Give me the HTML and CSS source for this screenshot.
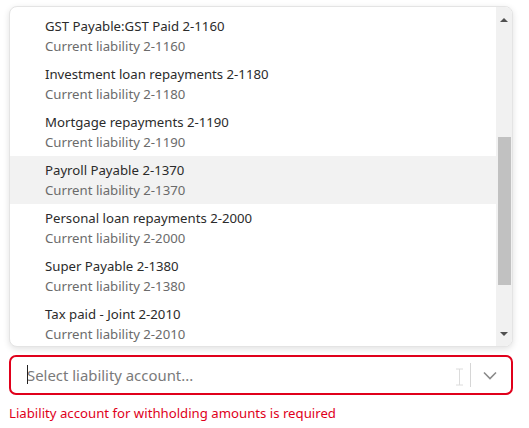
FILE: index.html
```html
<!DOCTYPE html>
<html>
<head>
<meta charset="utf-8">
<link rel="stylesheet" href="styles.css">
</head>
<body>
<div class="field">
  <div class="menu">
    <div class="list">
      <div class="item"><div class="name">GST Payable:GST Paid 2-1160</div><div class="sub">Current liability 2-1160</div></div>
      <div class="item"><div class="name">Investment loan repayments 2-1180</div><div class="sub">Current liability 2-1180</div></div>
      <div class="item"><div class="name">Mortgage repayments 2-1190</div><div class="sub">Current liability 2-1190</div></div>
      <div class="item hover"><div class="name">Payroll Payable 2-1370</div><div class="sub">Current liability 2-1370</div></div>
      <div class="item"><div class="name">Personal loan repayments 2-2000</div><div class="sub">Current liability 2-2000</div></div>
      <div class="item"><div class="name">Super Payable 2-1380</div><div class="sub">Current liability 2-1380</div></div>
      <div class="item"><div class="name">Tax paid - Joint 2-2010</div><div class="sub">Current liability 2-2010</div></div>
    </div>
    <div class="scrollbar">
      <div class="arrow up"></div>
      <div class="track"><div class="thumb"></div></div>
      <div class="arrow down"></div>
    </div>
  </div>
  <div class="control">
    <div class="value"><span class="caret"></span><span class="placeholder">Select liability account...</span></div>
    <svg class="ibeam" width="9" height="18" viewBox="0 0 9 18"><path d="M1 1h7M1 17h7M4.5 1v16" stroke="#dcdcdc" stroke-width="1" fill="none"/></svg>
    <span class="sep"></span>
    <svg class="chev" width="14" height="9" viewBox="0 0 14 9"><path d="M1 1.5l6 6 6-6" stroke="#8a8a8a" stroke-width="1.6" fill="none"/></svg>
  </div>
  <div class="error">Liability account for withholding amounts is required</div>
</div>
</body>
</html>
```
FILE: styles.css
```css
html, body {
  margin: 0;
  padding: 0;
  background: #fff;
}
body {
  font-family: "Noto Sans", "Open Sans", sans-serif;
  width: 529px;
  height: 428px;
  overflow: hidden;
}
.field {
  width: 504px;
  margin: 6px 0 0 9px;
}
.menu {
  height: 341px;
  box-sizing: border-box;
  border: 1px solid #e4e4e4;
  border-radius: 8px;
  box-shadow: 0 2px 6px rgba(0,0,0,0.12);
  display: flex;
  overflow: hidden;
  background: #fff;
}
.list {
  flex: 1;
  overflow: hidden;
  padding-top: 5px;
}
.item {
  height: 48px;
  box-sizing: border-box;
  padding: 4px 0 4px 35px;
}
.item.hover {
  background: #f2f2f2;
}
.name {
  font-size: 13.2px;
  line-height: 20px;
  color: #2b2b2b;
  white-space: nowrap;
}
.sub {
  font-size: 13.2px;
  line-height: 20px;
  color: #6b6b6b;
  white-space: nowrap;
}
.scrollbar {
  width: 16px;
  background: #f1f1f1;
  display: flex;
  flex-direction: column;
}
.arrow {
  height: 16px;
  display: flex;
  align-items: center;
  justify-content: center;
}
.arrow::before {
  content: "";
  width: 0;
  height: 0;
  border-left: 4px solid transparent;
  border-right: 4px solid transparent;
}
.arrow.up::before {
  border-bottom: 4px solid #505050;
  margin-top: 10px;
}
.arrow.down::before {
  border-top: 4px solid #505050;
  margin-bottom: 8px;
}
.track {
  flex: 1;
  padding-top: 114px;
  box-sizing: border-box;
}
.thumb {
  margin-left: 2px;
  width: 13px;
  height: 148px;
  background: #c1c1c1;
}
.control {
  margin-top: 8px;
  height: 40px;
  box-sizing: border-box;
  border: 2px solid #e0001b;
  border-radius: 7px;
  display: flex;
  align-items: center;
  padding: 0 14px 0 16px;
}
.value {
  flex: 1;
  display: flex;
  align-items: center;
  position: relative;
}
.caret {
  position: absolute;
  left: 0;
  top: 1px;
  width: 1px;
  height: 19px;
  background: #222;
}
.placeholder {
  font-size: 14.9px;
  line-height: 22px;
  color: #7a7a7a;
}
.ibeam {
  margin-right: 6px;
  margin-top: 4px;
}
.sep {
  width: 1px;
  height: 24px;
  background: #d6d6d6;
  margin-right: 12px;
}
.chev {
  display: block;
}
.error {
  margin-top: 9px;
  font-size: 13.2px;
  line-height: 18px;
  color: #e0001b;
}
```
